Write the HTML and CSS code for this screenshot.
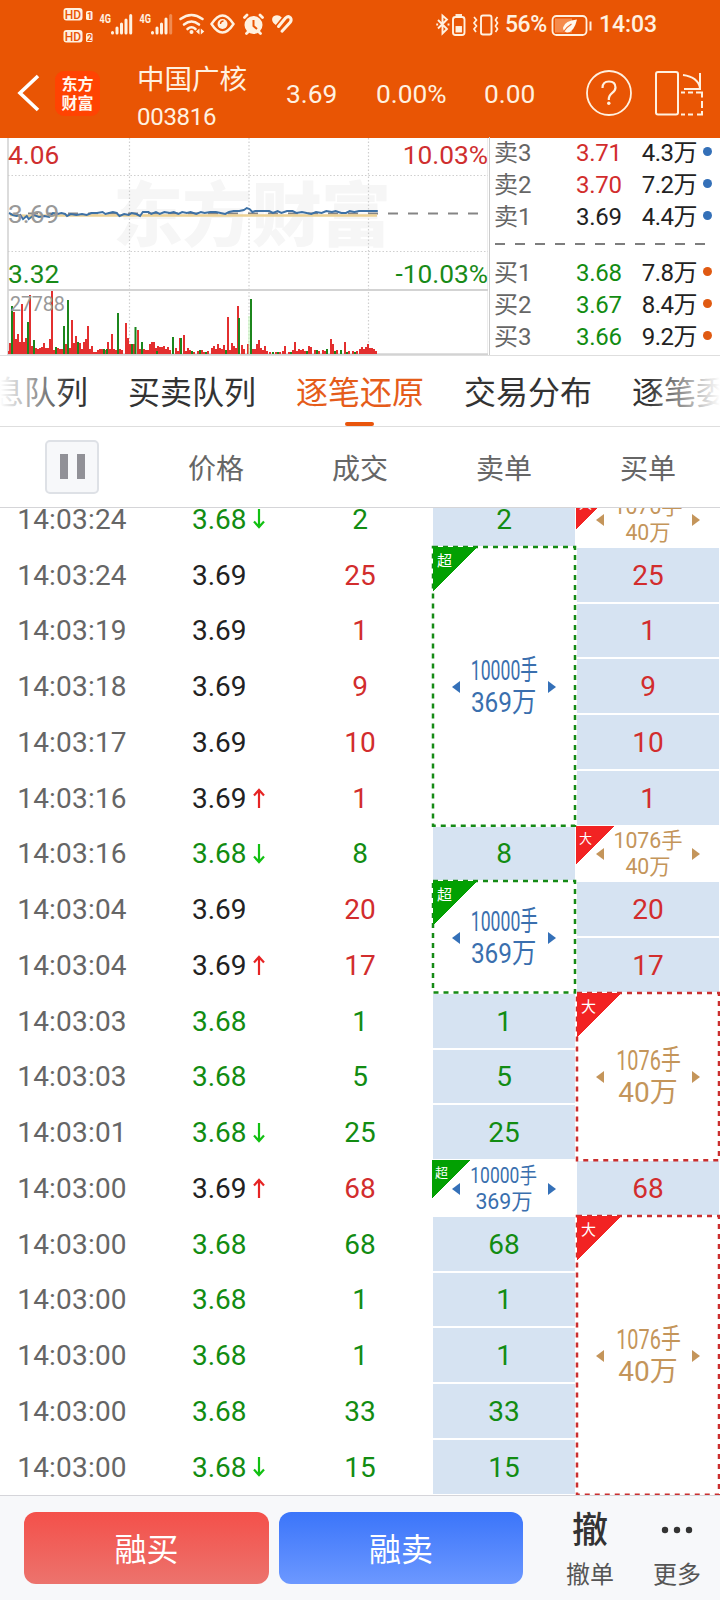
FILE: index.html
```html
<!DOCTYPE html>
<html lang="zh-CN">
<head>
<meta charset="utf-8">
<title>中国广核 003816</title>
<link rel="stylesheet" href="styles.css">
</head>
<body>
<div class="app">
  <header class="top">
    <div class="status">
      <svg class="status-left" width="240" height="48" viewBox="60 0 240 48">
        <g fill="#fff1e0">
          <rect x="63.500" y="8" width="19" height="12.500" rx="3"/><rect x="86" y="11" width="6.500" height="9" rx="1.500"/>
          <rect x="63.500" y="30" width="19" height="12.500" rx="3"/><rect x="86" y="33" width="6.500" height="9" rx="1.500"/>
        </g>
        <g class="hd"><text x="64.700" y="18.700">HD</text><text x="64.700" y="40.700">HD</text></g>
        <g class="hdn"><text x="87" y="19">1</text><text x="87" y="41">2</text></g>
        <g class="net"><text x="99.500" y="23" textLength="11.500" lengthAdjust="spacingAndGlyphs">4G</text><text x="139.500" y="23" textLength="11.500" lengthAdjust="spacingAndGlyphs">4G</text></g>
        <g stroke="#fff1e0" stroke-width="3" stroke-linecap="round">
          <path d="M112.500 32.500v.5M117 28v5M121.500 24v9M126 20v13M130.700 15.500v17.500"/>
          <path d="M152.500 32.500v.5M157 28v5M161.500 24v9M166 19v14"/>
          <path d="M170.700 15.500v17.500" opacity=".35"/>
        </g>
        <g fill="none" stroke="#fff1e0" stroke-width="2.600" stroke-linecap="round">
          <path d="M180.500 19q11-8 22 0M184 24.500q7.500-6 15 0M187.500 29q4-3.500 8 0"/>
          <path d="M211.500 24q11-17 22 0q-11 17-22 0z" stroke-width="2.400"/>
        </g>
        <circle cx="191.500" cy="32" r="2" fill="#fff1e0"/><path d="M199.500 28.500v6l-3.500-3zM200.800 28.500v6l3.500-3z" fill="#fff1e0"/>
        <circle cx="222.500" cy="24" r="5" fill="#fff1e0"/><path d="M220.500 24q0-3 3-3" fill="none" stroke="#e95504" stroke-width="1.300"/>
        <circle cx="253.500" cy="25" r="9" fill="#fff1e0"/>
        <path d="M253.500 20v6l3.500 3" stroke="#e95504" stroke-width="2" fill="none"/>
        <path d="M244.500 17.500l2.500-2.500M262.500 17.500l-2.500-2.500M248 32l-1.500 1.500M259 32l1.500 1.500" stroke="#fff1e0" stroke-width="2.800" stroke-linecap="round"/>
        <path d="M272.300 21q-1-4.500 3-5.500q3.500-1 6.500 2l-6 7.500q-3-2-3.500-4z" fill="#fff1e0"/>
        <path d="M278.500 26.500l7-8.500q2.800-2.500 5-.3q1.500 2.300-.5 4.800l-8 8.700" fill="none" stroke="#fff1e0" stroke-width="3" stroke-linecap="round"/>
      </svg>
      <div class="status-right">
        <svg width="64" height="24" viewBox="436 12 64 24" fill="none" stroke="#fff1e0" stroke-width="1.900">
          <path d="M438 19l9 9-4.500 4.500v-18l4.500 4-9 9M437.200 22.500v2M448.500 22.500v2"/>
          <rect x="453" y="16" width="11.500" height="18" rx="2.500"/><path d="M455.500 14h6.500"/><rect x="456.500" y="26" width="4.500" height="4.500" fill="#fff1e0"/>
          <rect x="481" y="14.500" width="10.500" height="19" rx="2"/>
          <path d="M474 16l2.500 3-2.500 3 2.500 3-2.500 3 2 3M497.500 16l-2 3 2 3-2 3 2 3-2 3" stroke-width="1.700"/>
        </svg>
        <span class="pct">56%</span>
        <svg class="battery" width="42" height="24" viewBox="552 12 42 24">
          <rect x="553.500" y="15" width="34" height="19" rx="4" fill="none" stroke="#fff1e0" stroke-width="1.800"/>
          <rect x="556" y="17.500" width="17" height="14" fill="#f58a4c"/>
          <path d="M591.500 20.500v9" stroke="#fff1e0" stroke-width="2"/>
          <path d="M578 18.500q-12 1-14 8q0 4 4 5q7 0 10-13z" fill="#fff8ee"/><path d="M563.500 32q4-6 9-9" stroke="#f07030" stroke-width="1.200" fill="none"/>
        </svg>
        <span class="clock">14:03</span>
      </div>
    </div>
    <div class="title">
      <svg class="back" width="24" height="38" viewBox="0 0 24 38"><path d="M21 2L3 19l18 17" fill="none" stroke="#fff" stroke-width="3.600"/></svg>
      <div class="logo"><span>东方</span><span>财富</span></div>
      <div class="stock"><div class="stock-name">中国广核</div><div class="stock-code">003816</div></div>
      <div class="q q1">3.69</div><div class="q q2">0.00%</div><div class="q q3">0.00</div>
      <svg class="help" width="46" height="46" viewBox="0 0 46 46"><circle cx="23" cy="23" r="22" fill="none" stroke="#fff1e0" stroke-width="1.800"/><path d="M16.500 18q0-6.500 6.500-6.500t6.500 6q0 3-3.500 5.700t-3.200 6.800" fill="none" stroke="#fff1e0" stroke-width="2.200"/><circle cx="22.800" cy="33.200" r="1.700" fill="#fff1e0"/></svg>
      <svg class="rotate" width="50" height="46" viewBox="0 0 50 46" fill="none" stroke="#fff1e0" stroke-width="2"><rect x="2" y="2" width="22" height="42.500" rx="2"/><path d="M29 5q15 2 17 13M46 3v16H30"/><path d="M27 22.500h4M34 22.500h5M42 22.500h6v5M48 31v7M48 41v3.500h-5M39 44.500h-5M31 44.500h-4"/></svg>
    </div>
  </header>

  <section class="quote">
    <div class="chart">
      <svg class="plot" width="488" height="217" viewBox="0 138 488 217">
        <path d="M8 138v217M488.500 138v217" stroke="#dcdcdc" stroke-width="2"/>
        <text class="mark" x="113" y="241" textLength="278">东方财富</text>
        <path d="M129.500 138v216M249 138v216M368.500 138v216M8 175.500h480M8 251.500h480" stroke="#cfcfcf" stroke-width="1.200" stroke-dasharray="1.500 2"/>
        <path d="M8 290h480M8 354.300h480" stroke="#d3d3d3" stroke-width="2"/>
        <path d="M28 213.500h450" stroke="#858585" stroke-width="2" stroke-dasharray="10 10"/>
        <path d="M10 215l20 1 20-.5h327" fill="none" stroke="#ecd194" stroke-width="2.500"/>
        <path class="price" d="M9 213l4 2 4 1 4-1 3 4 4-3 2 3 3-2 3-2 5 2 6-1 5 1 4-4 5 1 4-1 4 1 2 2 4-2 6 1 6-1 5 1 5-2 6 0 6-1 3 2 4-1 4-1 4 1 3 3 5-2 5 1 3-2 5 1 4 2 3-4 6 0 3 2 5-2 4 2 5-2 6 1 4-1 5 2 4-2 5 1 4-1 6 2 5-2 4 1 6-1 6 0 5 1 5 1 4-2 5-1 6 0 5-1 3-2 3 1 3 3 3-1h15l4 2 5-2 4 2 6-2 6 0 4 2 6-1 5 1 5 1 5-2 6 1 5-2 6 1 4-1 6 2 5 0 4-2 5 1 5-1h20" fill="none" stroke="#3e71a5" stroke-width="2"/>
        <g class="vol" fill="none" stroke-width="2">
          <path stroke="#e32f2f" d="M9 354v-3M10 354v-11M14 354v-42M16 354v-15M18 354v-20M20 354v-12M22 354v-50M24 354v-12M26 354v-16M30 354v-59M32 354v-8M36 354v-6M38 354v-5M40 354v-6M42 354v-7M44 354v-11M46 354v-6M48 354v-6M50 354v-15M52 354v-63M54 354v-4M58 354v-6M60 354v-5M62 354v-5M66 354v-10M70 354v-6M72 354v-34M74 354v-11M76 354v-18M80 354v-11M82 354v-5M84 354v-12M86 354v-15M88 354v-28M90 354v-5M92 354v-8M94 354v-2M96 354v-2M98 354v-4M100 354v-5M102 354v-5M106 354v-4M108 354v-12M110 354v-5M112 354v-20M114 354v-5M116 354v-4M120 354v-5M122 354v-4M126 354v-31M128 354v-16M130 354v-10M134 354v-10M138 354v-24M140 354v-5M144 354v-5M146 354v-4M148 354v-4M150 354v-10M152 354v-12M154 354v-12M156 354v-6M158 354v-8M160 354v-7M162 354v-7M164 354v-8M166 354v-5M168 354v-7M170 354v-4M176 354v-6M178 354v-3M180 354v-16M184 354v-19M186 354v-3M188 354v-6M190 354v-4M194 354v-2M198 354v-3M202 354v-4M204 354v-2M208 354v-3M212 354v-6M214 354v-8M216 354v-5M218 354v-10M220 354v-6M222 354v-5M224 354v-9M228 354v-37M230 354v-4M232 354v-11M234 354v-8M236 354v-6M238 354v-48M242 354v-9M244 354v-5M248 354v-10M253 354v-5M255 354v-5M257 354v-10M259 354v-14M261 354v-6M263 354v-4M265 354v-8M267 354v-3M270 354v-2M276 354v-2M280 354v-2M283 354v-3M285 354v-8M289 354v-2M293 354v-4M295 354v-12M297 354v-3M299 354v-5M301 354v-4M303 354v-5M305 354v-3M309 354v-8M311 354v-7M315 354v-4M319 354v-3M323 354v-4M325 354v-3M331 354v-15M333 354v-10M337 354v-4M345 354v-12M349 354v-3M353 354v-3M357 354v-3M360 354v-5M362 354v-7M364 354v-5M366 354v-7M368 354v-10M370 354v-6M372 354v-6M374 354v-5M376 354v-3"/>
          <path stroke="#1c861c" d="M12 354v-48M28 354v-32M34 354v-14M56 354v-7M64 354v-28M68 354v-54M78 354v-12M104 354v-5M107 354v-5M118 354v-41M132 354v-10M135.500 354v-27M142 354v-12M157 354v-3M173 354v-17M181 354v-16M192 354v-3M200 354v-4M206 354v-2M226 354v-4M239 354v-36M251 354v-55M273 354v-2M278 354v-2M291 354v-2M307 354v-3M317 354v-4M327 354v-5M335 354v-3M341 354v-4M347 354v-2M355 354v-2"/>
          <path stroke="#bdf5b3" d="M249 354v-38" stroke-width="1"/>
        </g>
      </svg>
      <span class="lab hi-price">4.06</span><span class="lab hi-pct">10.03%</span>
      <span class="lab mid">3.69</span>
      <span class="lab lo-price">3.32</span><span class="lab lo-pct">-10.03%</span>
      <span class="lab vmax">27788</span>
    </div>
    <div class="book">
      <div class="brow"><span>卖3</span><b class="red">3.71</b><i>4.3万</i><u class="blue-dot"></u></div>
      <div class="brow"><span>卖2</span><b class="red">3.70</b><i>7.2万</i><u class="blue-dot"></u></div>
      <div class="brow"><span>卖1</span><b>3.69</b><i>4.4万</i><u class="blue-dot"></u></div>
      <svg class="sep" width="226" height="24"><path d="M6 11h212" stroke="#7d7d7d" stroke-width="2" stroke-dasharray="10 10"/></svg>
      <div class="brow"><span>买1</span><b class="green">3.68</b><i>7.8万</i><u></u></div>
      <div class="brow"><span>买2</span><b class="green">3.67</b><i>8.4万</i><u></u></div>
      <div class="brow"><span>买3</span><b class="green">3.66</b><i>9.2万</i><u></u></div>
    </div>
  </section>

  <nav class="tabs">
    <span>消息队列</span><span>买卖队列</span><span class="active">逐笔还原</span><span>交易分布</span><span>逐笔委托</span>
  </nav>

  <div class="head">
    <div><button class="pause"><i></i><i></i></button></div><div>价格</div><div>成交</div><div>卖单</div><div>买单</div>
  </div>

  <main class="ticks">
    <div class="list">
      <div class="row"><span class="t">14:03:24</span><span class="p green">3.68<svg class="dn"><use href="#down"/></svg></span><span class="green">2</span></div>
      <div class="row"><span class="t">14:03:24</span><span class="p">3.69</span><span class="red">25</span></div>
      <div class="row"><span class="t">14:03:19</span><span class="p">3.69</span><span class="red">1</span></div>
      <div class="row"><span class="t">14:03:18</span><span class="p">3.69</span><span class="red">9</span></div>
      <div class="row"><span class="t">14:03:17</span><span class="p">3.69</span><span class="red">10</span></div>
      <div class="row"><span class="t">14:03:16</span><span class="p">3.69<svg class="up"><use href="#rise"/></svg></span><span class="red">1</span></div>
      <div class="row"><span class="t">14:03:16</span><span class="p green">3.68<svg class="dn"><use href="#down"/></svg></span><span class="green">8</span></div>
      <div class="row"><span class="t">14:03:04</span><span class="p">3.69</span><span class="red">20</span></div>
      <div class="row"><span class="t">14:03:04</span><span class="p">3.69<svg class="up"><use href="#rise"/></svg></span><span class="red">17</span></div>
      <div class="row"><span class="t">14:03:03</span><span class="p green">3.68</span><span class="green">1</span></div>
      <div class="row"><span class="t">14:03:03</span><span class="p green">3.68</span><span class="green">5</span></div>
      <div class="row"><span class="t">14:03:01</span><span class="p green">3.68<svg class="dn"><use href="#down"/></svg></span><span class="green">25</span></div>
      <div class="row"><span class="t">14:03:00</span><span class="p">3.69<svg class="up"><use href="#rise"/></svg></span><span class="red">68</span></div>
      <div class="row"><span class="t">14:03:00</span><span class="p green">3.68</span><span class="green">68</span></div>
      <div class="row"><span class="t">14:03:00</span><span class="p green">3.68</span><span class="green">1</span></div>
      <div class="row"><span class="t">14:03:00</span><span class="p green">3.68</span><span class="green">1</span></div>
      <div class="row"><span class="t">14:03:00</span><span class="p green">3.68</span><span class="green">33</span></div>
      <div class="row"><span class="t">14:03:00</span><span class="p green">3.68<svg class="dn"><use href="#down"/></svg></span><span class="green">15</span></div>
    </div>
    <div class="orders sell">
      <div class="cell">2</div>
      <div class="block n5"><svg class="dash"><rect width="100%" height="100%"/></svg><em>超</em><s></s><p><span class="w5">10000手</span><span class="w3">369万</span></p><s class="r"></s></div>
      <div class="cell">8</div>
      <div class="block n2"><svg class="dash"><rect width="100%" height="100%"/></svg><em>超</em><s></s><p><span class="w5">10000手</span><span class="w3">369万</span></p><s class="r"></s></div>
      <div class="cell">1</div>
      <div class="cell">5</div>
      <div class="cell">25</div>
      <div class="block n1"><em>超</em><s></s><p><span class="w5">10000手</span><span>369万</span></p><s class="r"></s></div>
      <div class="cell">68</div>
      <div class="cell">1</div>
      <div class="cell">1</div>
      <div class="cell">33</div>
      <div class="cell">15</div>
    </div>
    <div class="orders buy">
      <div class="block n1"><em>大</em><s></s><p><span>1076手</span><span>40万</span></p><s class="r"></s></div>
      <div class="cell">25</div>
      <div class="cell">1</div>
      <div class="cell">9</div>
      <div class="cell">10</div>
      <div class="cell">1</div>
      <div class="block n1"><em>大</em><s></s><p><span>1076手</span><span>40万</span></p><s class="r"></s></div>
      <div class="cell">20</div>
      <div class="cell">17</div>
      <div class="block n3"><svg class="dash"><rect width="100%" height="100%"/></svg><em>大</em><s></s><p><span class="w4">1076手</span><span>40万</span></p><s class="r"></s></div>
      <div class="cell">68</div>
      <div class="block n5"><svg class="dash"><rect width="100%" height="100%"/></svg><em>大</em><s></s><p><span class="w4">1076手</span><span>40万</span></p><s class="r"></s></div>
    </div>
  </main>

  <footer class="bottom">
    <button class="btn buy-btn">融买</button>
    <button class="btn sell-btn">融卖</button>
    <div class="act cancel"><strong>撤</strong><span>撤单</span></div>
    <div class="act more"><svg width="32" height="8"><g fill="#333"><circle cx="4" cy="4" r="3.200"/><circle cx="16" cy="4" r="3.200"/><circle cx="28" cy="4" r="3.200"/></g></svg><span>更多</span></div>
  </footer>
</div>
<svg class="defs"><symbol id="down" viewBox="0 0 12 20"><path d="M6 0v18M1 12.500l5 5.500 5-5.500" fill="none" stroke="#12c012" stroke-width="2.200"/></symbol><symbol id="rise" viewBox="0 0 12 20"><path d="M6 20V2M1 7.500L6 2l5 5.500" fill="none" stroke="#e62424" stroke-width="2.200"/></symbol></svg>
</body>
</html>
```
FILE: styles.css
```css
* { box-sizing: border-box; }
body { margin: 0; background: #fff; font-family: Roboto, "Noto Sans CJK SC", sans-serif; color: #222; }
.app { width: 720px; height: 1600px; display: flex; flex-direction: column; overflow: hidden; }
.defs { display: none; }
.red { color: #d22d2d; }
.green { color: #128c12; }

.top { height: 138px; background: #e95504; color: #fff1e0; }
.status { height: 48px; display: flex; justify-content: space-between; padding: 0 64px 0 60px; }
.hd text { font: 500 12px Roboto, sans-serif; fill: #e95504; }
.hdn text { font: 700 9px Roboto, sans-serif; fill: #e95504; }
.net text { font: 700 13px Roboto, sans-serif; fill: #fff1e0; }
.status-right { display: flex; align-items: center; padding-top: 1px; font-size: 23px; font-weight: 500; }
.pct { width: 42px; margin-left: 5px; letter-spacing: -.5px; }
.battery { margin-left: 4px; }
.clock { width: 57px; margin-left: 6px; letter-spacing: -.1px; }
.title { height: 90px; display: flex; align-items: center; }
.back { margin-left: 17px; margin-top: 0; }
.logo { width: 45px; height: 45px; margin-left: 14px; border-radius: 9px; background: #ff4302; display: flex; flex-direction: column; align-items: center; justify-content: center; font: 700 16px/20px "Noto Sans CJK SC", sans-serif; color: #fff8ee; }
.logo span { height: 19px; line-height: 18px; }
.stock { margin-left: 37px; width: 112px; padding-top: 12px; }
.stock-name { font-size: 27.500px; line-height: 38px; white-space: nowrap; margin-top: -4px; }
.stock-code { font-size: 24px; line-height: 34px; letter-spacing: -.3px; margin-top: 1px; }
.q { font-size: 26.300px; white-space: nowrap; margin-top: 2px; }
.q1 { margin-left: 37px; width: 90px; }
.q2 { width: 108px; }
.q3 { width: 102px; }
.help { margin-top: 0; }
.rotate { margin: 0 0 0 22px; }

.quote { height: 218px; display: flex; border-bottom: 1px solid #dedede; }
.chart { width: 489px; position: relative; }
.plot { display: block; }
.price { transform: translateX(9px) scaleX(.936) translateX(-9px); }
.mark { font: 900 70px "Noto Sans CJK SC", sans-serif; fill: #f6f6f6; }
.lab { position: absolute; font-size: 26.300px; line-height: 30px; }
.hi-price { left: 8px; top: 2px; color: #cf2f2f; }
.hi-pct { right: 1px; top: 2px; color: #cf2f2f; }
.mid { left: 8px; top: 61px; color: #999; }
.lo-price { left: 8px; top: 121px; color: #188a18; }
.lo-pct { right: 1px; top: 121px; color: #188a18; }
.vmax { left: 10px; top: 152px; font-size: 19.800px; letter-spacing: -.2px; color: #999; }
.book { width: 231px; padding-left: 4px; border-left: 1px solid #ccc; margin-top: -1px; }
.brow { height: 32px; display: grid; grid-template-columns: 82px 55px 66px 14px; align-items: center; font-size: 24px; line-height: 32px; white-space: nowrap; }
.brow span { color: #666; }
.brow b { font-weight: 400; letter-spacing: -.3px; }
.brow i { font-style: normal; text-align: right; letter-spacing: -.5px; }
.brow u { width: 9px; height: 9px; border-radius: 50%; background: #e05a12; margin: -4px 0 0 6px; }
.brow .blue-dot { background: #3470b8; }
.sep { display: block; margin-left: -5px; }

.tabs { height: 71px; display: flex; gap: 40px; padding-left: 0; border-bottom: 1px solid #dedede; overflow: hidden; position: relative; }
.tabs span { flex: none; width: 128px; height: 70px; font-size: 32px; line-height: 75px; color: #333; position: relative; }
.tabs span:first-child { margin-left: -40px; }
.tabs .active { color: #e55c1a; }
.tabs .active::after { content: ""; position: absolute; left: 49px; bottom: 0; width: 29px; height: 4px; border-radius: 2px; background: #e9550c; }
.tabs::before, .tabs::after { content: ""; position: absolute; top: 0; width: 72px; height: 70px; z-index: 1; }
.tabs::before { left: 0; background: linear-gradient(90deg, #fff, rgba(255,255,255,0)); }
.tabs::after { right: 0; background: linear-gradient(270deg, #fff, rgba(255,255,255,0)); }

.head { height: 81px; display: grid; grid-template-columns: repeat(5, 144px); align-items: center; text-align: center; font-size: 28px; color: #666; border-bottom: 1px solid #d5d5d8; padding-bottom: 1px; }
.pause { width: 54px; height: 54px; border: 2px solid #dee1e6; border-radius: 5px; background: #f7f8fa; display: flex; justify-content: center; align-items: center; gap: 9px; margin: 0 auto; padding: 0; }
.pause i { width: 8px; height: 25px; background: #919197; }

.ticks { height: 987px; display: flex; overflow: hidden; font-size: 28px; }
.list, .orders { margin-top: -16px; }
.list { width: 432px; margin-top: -16.500px; }
.row { height: 55.750px; display: grid; grid-template-columns: 144px 144px 144px; align-items: center; text-align: center; color: #666; }
.row .t { letter-spacing: .2px; }
.row .p { text-align: left; padding-left: 48px; color: #222; display: flex; align-items: center; }
.row .p.green, .row .green { color: #128c12; }
.row .red { color: #d22d2d; }
.row svg { width: 12px; height: 20px; margin-left: 6px; }
.orders { width: 144px; }
.cell { height: 53.750px; margin: 0 1px 2px; padding-top: 1px; background: #d6e3f2; display: flex; align-items: center; justify-content: center; }
.sell { color: #128c12; padding-top: 0; }
.buy { color: #d22d2d; }
.block { position: relative; display: flex; align-items: center; justify-content: center; }
.n1 { height: 55.750px; }
.n2 { height: 111.500px; }
.n3 { height: 167.250px; }
.n5 { height: 278.750px; }
.dash { position: absolute; left: 1px; top: -1px; width: 142px; height: 100%; overflow: visible; }
.dash rect { fill: none; stroke: #158a15; stroke-width: 2.500px; stroke-dasharray: 5px 5px; }
.buy .dash rect { stroke: #ca2f2f; }
.block em { position: absolute; left: 1px; top: -1px; width: 44px; height: 44px; padding: 6px 0 0 4px; background: linear-gradient(135deg, #02a002 50%, transparent 50.500%); color: #fff; font-style: normal; font-size: 15px; line-height: 17px; }
.buy em { background: linear-gradient(135deg, #f22323 50%, transparent 50.500%); }
.n1 em { left: 0; top: -1px; width: 38px; height: 38px; padding: 4px 0 0 3px; font-size: 13px; }
.block s { border: solid transparent; border-width: 6px 8px 6px 0; border-right-color: #3470b8; }
.block s.r { border-width: 6px 0 6px 8px; border-left-color: #3470b8; }
.buy .block s { border-right-color: #c4955a; }
.buy .block s.r { border-left-color: #c4955a; }
.block p { width: 88px; margin: 0; display: flex; flex-direction: column; align-items: center; line-height: 32px; color: #3a6fae; white-space: nowrap; }
.buy .block p { color: #c4955a; }
.block.n1 p { font-size: 21.300px; line-height: 26px; }
.w5 { transform: scaleX(.63); }
.w3 { transform: scaleX(.87); }
.w4 { transform: scaleX(.71); }
.n1 .w5 { transform: scaleX(.82); }

.bottom { height: 105px; border-top: 1px solid #d5d5da; background: #f7f8fa; display: flex; padding: 16px 0 0 24px; }
.btn { height: 72px; border: 0; border-radius: 12px; padding: 0 0 2px; color: #fff; font: 32px Roboto, "Noto Sans CJK SC", sans-serif; }
.buy-btn { width: 245px; background: linear-gradient(#f4504a, #ec736d); }
.sell-btn { width: 244px; margin-left: 10px; background: linear-gradient(#3b75fa, #6c98ff); }
.act { display: flex; flex-direction: column; align-items: center; font-size: 24px; line-height: 32px; color: #555; }
.cancel { width: 60px; margin-left: 37px; }
.cancel strong { font-size: 36px; font-weight: 500; line-height: 39px; color: #333; height: 47px; }
.more { width: 60px; margin-left: 27px; padding-top: 14px; }
.more span { margin-top: 25px; }
```
